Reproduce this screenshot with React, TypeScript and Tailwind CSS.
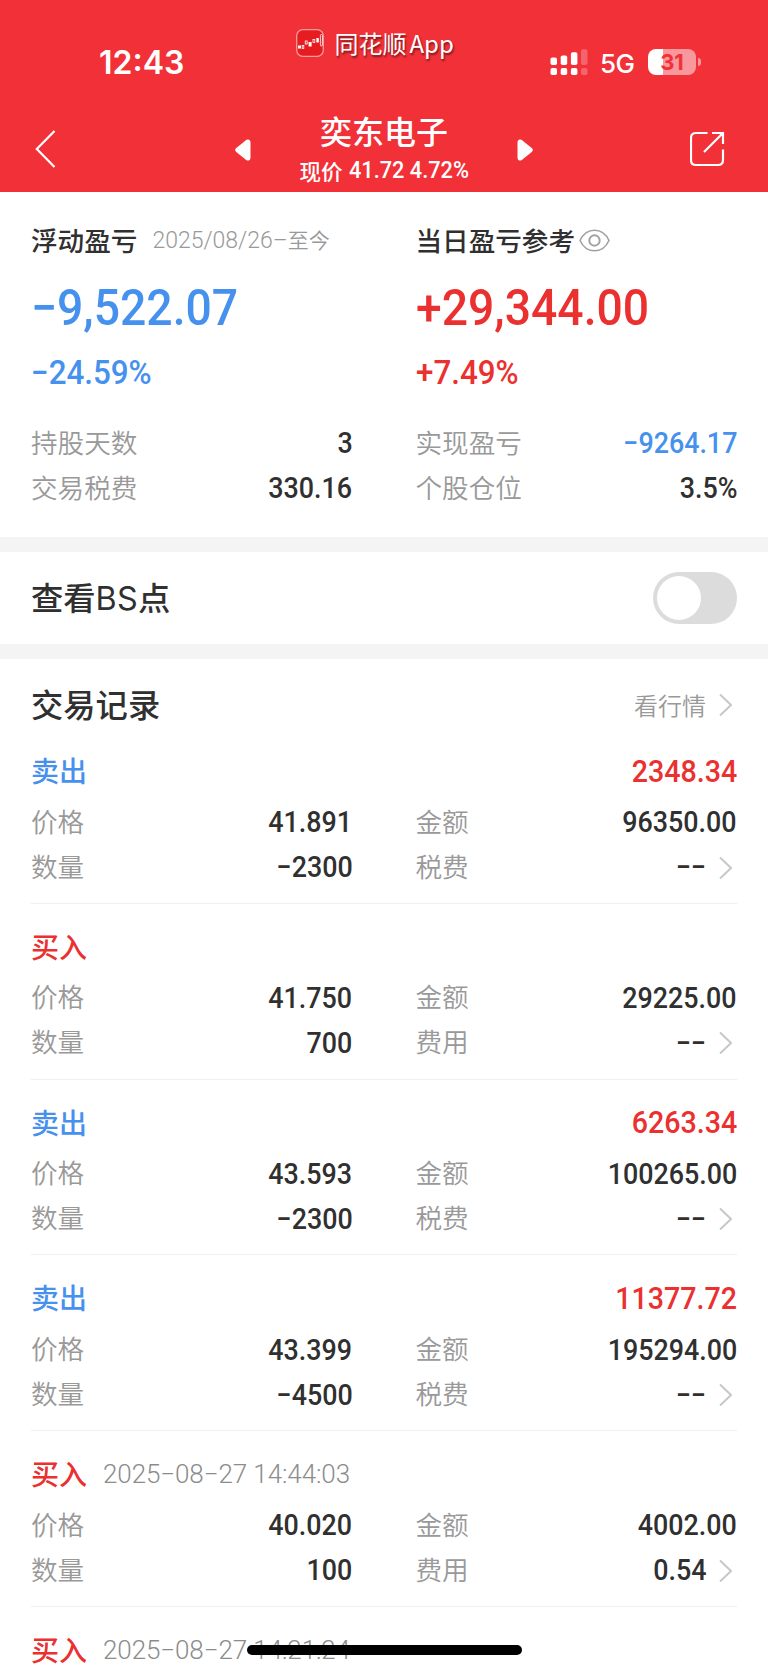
import React from 'react';

type Side = 'buy' | 'sell';

interface TradeRecord {
  side: Side;
  time?: string;
  profit?: string;
  price?: string;
  amount?: string;
  quantity?: string;
  fee?: string;
}

const RECORDS: TradeRecord[] = [
  { side: 'sell', profit: '2348.34', price: '41.891', amount: '96350.00', quantity: '−2300', fee: '−−' },
  { side: 'buy', price: '41.750', amount: '29225.00', quantity: '700', fee: '−−' },
  { side: 'sell', profit: '6263.34', price: '43.593', amount: '100265.00', quantity: '−2300', fee: '−−' },
  { side: 'sell', profit: '11377.72', price: '43.399', amount: '195294.00', quantity: '−4500', fee: '−−' },
  { side: 'buy', time: '2025−08−27 14:44:03', price: '40.020', amount: '4002.00', quantity: '100', fee: '0.54' },
  { side: 'buy', time: '2025−08−27 14:21:24' },
];

/** 右箭头 */
const Chevron = () => (
  <svg className="ml-[13px] mr-[5px] h-6 w-[13px] shrink-0" viewBox="0 0 13 24" fill="none" stroke="#c8c8c8" strokeWidth="2">
    <path d="M1 1.5 12 12 1 22.5" />
  </svg>
);

interface FieldProps {
  label: string;
  value?: string;
  valueClass?: string;
  arrow?: boolean;
}

/** 标签 + 数值 */
const Field: React.FC<FieldProps> = ({ label, value, valueClass = 'text-[#303030]', arrow = false }) => (
  <div className="flex h-[45px] items-center justify-between">
    <span className="-mt-[3px] text-[26.6px] font-[350] text-[#999]">{label}</span>
    <span className="flex items-center">
      <span className={`mt-px origin-right scale-x-[0.91] font-['Roboto',sans-serif] text-[29.5px] font-medium ${valueClass}`}>{value}</span>
      {arrow && <Chevron />}
    </span>
  </div>
);

/** 状态栏 */
const StatusBar = () => (
  <div className="flex h-[94px] items-start text-white">
    <span className="ml-[99px] mt-[46px] w-[197px] font-['Inter',sans-serif] text-[32px] font-semibold leading-[34px]">12:43</span>
    <svg className="mt-[29px] h-7 w-7" viewBox="0 0 28 28" fill="none">
      <rect x="0.7" y="0.7" width="26.6" height="26.6" rx="6" fill="#e51c20" stroke="#f79a9d" strokeWidth="1.3" />
      <g fill="#fff">
        <rect x="2" y="16.5" width="3" height="3" />
        <rect x="12.6" y="13" width="3" height="4.5" />
        <rect x="20.4" y="9" width="2.4" height="4.5" />
      </g>
      <g stroke="#fff" strokeWidth="0.8">
        <rect x="6.2" y="16.5" width="1.6" height="3" />
        <rect x="9.2" y="12" width="2" height="3" />
        <rect x="17" y="10.5" width="1.8" height="3" />
        <rect x="24.4" y="5.5" width="2" height="11.5" rx="1" />
      </g>
    </svg>
    <span className="ml-[10.5px] mt-[26.5px] w-[215.5px] text-[24px] leading-8 [text-shadow:1px_2px_2px_rgba(0,0,0,0.5)]">
      同花顺<span className="ml-[3px]">App</span>
    </span>
    <svg className="mt-[49px] h-[27px] w-[38px]" viewBox="0 0 38 27" fill="#fff">
      <rect x="0.5" y="8.5" width="6.5" height="7.5" rx="1.8" />
      <rect x="0.5" y="19" width="6.5" height="7" rx="1.8" />
      <rect x="10.7" y="6.5" width="6.5" height="9.5" rx="1.8" />
      <rect x="10.7" y="19" width="6.5" height="7" rx="1.8" />
      <rect x="20.9" y="3.3" width="6.5" height="12.7" rx="1.8" />
      <rect x="20.9" y="19" width="6.5" height="7" rx="1.8" />
      <g fillOpacity="0.25">
        <rect x="31" y="0.3" width="6.5" height="15.7" rx="1.8" />
        <rect x="31" y="19" width="6.5" height="7" rx="1.8" />
      </g>
    </svg>
    <span className="ml-[12px] mt-[48.5px] w-[48px] font-['Inter',sans-serif] text-[26px] font-medium leading-[30px] tracking-[-0.5px]">5G</span>
    <div className="mt-[49px] flex items-center gap-[2px]">
      <div className="flex h-[26px] w-12 items-center justify-center rounded-[8px] bg-[linear-gradient(90deg,#fff_31%,#f9989c_31%)] font-['Inter',sans-serif] text-[22px] font-bold leading-none text-[#f23038]">
        31
      </div>
      <div className="h-[8px] w-[2.5px] rounded-r-full bg-[#f9989c]" />
    </div>
  </div>
);

/** 导航栏 */
const NavBar = () => (
  <div className="flex h-[98px] items-start justify-between pl-[35px] pr-[43px] text-white">
    <svg className="mr-[22px] mt-[36px] h-[38px] w-[21px]" viewBox="0 0 21 38" fill="none" stroke="#fff" strokeWidth="2.2">
      <path d="M19.5 1 1.8 19 19.5 37" />
    </svg>
    <div className="flex items-start">
      <svg className="mt-[45px] h-[22px] w-[16px]" viewBox="0 0 16 22" fill="#fff">
        <path d="M1 9.3 11.5 0.8Q15.2-.6 15.5 3v16q-.3 3.6-4 2.2L1 12.7q-1.6-1.7 0-3.4Z" />
      </svg>
      <div className="flex w-[266px] flex-col items-center">
        <h1 className="mt-[14px] text-[32px] font-medium leading-[44px]">奕东电子</h1>
        <p className="ml-[7px] mt-[3px] flex items-center whitespace-pre text-[21.5px] font-medium leading-[30px]">
          现价
          <span className="ml-[6px] mt-px origin-left scale-x-[0.945] font-['Roboto',sans-serif] text-[23px]">41.72 4.72%</span>
        </p>
      </div>
      <svg className="mt-[45px] h-[22px] w-[16px]" viewBox="0 0 16 22" fill="#fff">
        <path d="M15 9.3 4.5 0.8Q.8-.6.5 3v16q.3 3.6 4 2.2L15 12.7q1.6-1.7 0-3.4Z" />
      </svg>
    </div>
    <svg className="mt-[37px] h-[36px] w-[35px]" viewBox="0 0 35 36" fill="none" stroke="#fff" strokeWidth="2.2">
      <path d="M17.5 2H6Q1 2 1 7v22q0 5 5 5h22q5 0 5-5V18.500M22 2H33v11M33 2 14 21" />
    </svg>
  </div>
);

interface SummaryColumnProps {
  title: React.ReactNode;
  total: string;
  percent: string;
  colorClass: string;
  children: React.ReactNode;
}

const SummaryColumn: React.FC<SummaryColumnProps> = ({ title, total, percent, colorClass, children }) => (
  <div>
    <div className="flex h-[46px] items-center">{title}</div>
    <div
      className={`mt-[15px] flex h-[60px] origin-left scale-x-[0.917] items-center font-['Roboto',sans-serif] text-[50.5px] font-medium ${colorClass}`}
    >
      {total}
    </div>
    <div
      className={`mt-[14px] flex h-10 origin-left scale-x-[0.95] items-center font-['Roboto',sans-serif] text-[33px] font-medium ${colorClass}`}
    >
      {percent}
    </div>
    <div className="mt-[29px]">{children}</div>
  </div>
);

/** 盈亏概览 */
const Summary = () => (
  <section className="grid h-[345px] shrink-0 grid-cols-2 gap-x-[63px] px-[31px] pt-[25px]">
    <SummaryColumn
      title={
        <>
          <span className="text-[26.6px] font-medium text-[#303030]">浮动盈亏</span>
          <span className="ml-[15px] whitespace-nowrap font-['Roboto','Noto_Sans_CJK_SC',sans-serif] text-[23px] font-light text-[#999]">
            2025/08/26–<span className="text-[21px] font-[350]">至今</span>
          </span>
        </>
      }
      total="−9,522.07"
      percent="−24.59%"
      colorClass="text-[#4691ee]"
    >
      <Field label="持股天数" value="3" />
      <Field label="交易税费" value="330.16" />
    </SummaryColumn>
    <SummaryColumn
      title={
        <>
          <span className="text-[26.6px] font-medium text-[#303030]">当日盈亏参考</span>
          <svg className="ml-[3.500px] h-[23px] w-[31px]" viewBox="0 0 31 23" fill="none" stroke="#a0a0a0" strokeWidth="1.6">
            <path d="M1 11.5C4 5 9.500 1.200 15.500 1.200S27 5 30 11.500C27 18 21.500 21.800 15.500 21.800S4 18 1 11.500Z" />
            <circle cx="15.500" cy="11.500" r="5.200" strokeWidth="1.900" />
          </svg>
        </>
      }
      total="+29,344.00"
      percent="+7.49%"
      colorClass="text-[#eb3030]"
    >
      <Field label="实现盈亏" value="−9264.17" valueClass="text-[#4691ee]" />
      <Field label="个股仓位" value="3.5%" />
    </SummaryColumn>
  </section>
);

/** 单条交易记录 */
const RecordItem: React.FC<{ record: TradeRecord }> = ({ record }) => {
  const isSell = record.side === 'sell';
  return (
    <li className="h-[175.75px] shrink-0 border-b border-[#f0f0f0] pt-[21px]">
      <div className="flex h-[45px] items-center">
        <span className={`-mt-[3px] text-[28px] font-medium ${isSell ? 'text-[#4691ee]' : 'text-[#eb3030]'}`}>{isSell ? '卖出' : '买入'}</span>
        {record.time && (
          <span className="-mt-px ml-[16px] font-['Roboto',sans-serif] text-[26px] font-light tracking-[-0.1px] text-[#8c8c8c]">{record.time}</span>
        )}
        <span className="ml-auto origin-right scale-x-[0.908] font-['Roboto',sans-serif] text-[31.5px] font-medium text-[#eb3030]">
          {record.profit}
        </span>
      </div>
      {record.price && (
        <div className="mt-[6px] grid grid-cols-2 gap-x-[63px]">
          <Field label="价格" value={record.price} />
          <Field label="金额" value={record.amount} />
          <Field label="数量" value={record.quantity} />
          <Field label={isSell ? '税费' : '费用'} value={record.fee} arrow />
        </div>
      )}
    </li>
  );
};

const App: React.FC = () => (
  <div className="relative flex h-[1670px] w-[768px] flex-col overflow-hidden bg-white font-['Noto_Sans_CJK_SC',sans-serif] leading-none">
    <header className="h-[192px] shrink-0 bg-[#f23038]">
      <StatusBar />
      <NavBar />
    </header>

    <Summary />

    <section className="flex h-[122px] shrink-0 items-center justify-between border-y-[15px] border-[#f4f4f4] px-[31px]">
      <span className="text-[32.3px] font-medium text-[#303030]">
        查看<span className="font-['Inter',sans-serif] font-normal tracking-[0.3px]">BS</span>点
      </span>
      <button type="button" aria-label="查看BS点" className="flex h-[52px] w-[84px] items-center rounded-full bg-[#dcdcdc] p-1">
        <span className="h-11 w-11 rounded-full bg-white" />
      </button>
    </section>

    <section className="px-[31px]">
      <div className="flex h-[69px] items-center justify-between pt-[23px]">
        <h2 className="-mt-[4px] text-[32.3px] font-medium text-[#303030]">交易记录</h2>
        <span className="flex items-center text-[24px] font-[350] text-[#999]">
          看行情
          <Chevron />
        </span>
      </div>
      <ul>
        {RECORDS.map((record, i) => (
          <RecordItem key={i} record={record} />
        ))}
      </ul>
    </section>

    {/* Home 指示条 */}
    <div className="absolute bottom-[15.5px] left-[247px] h-[10px] w-[275px] rounded-full bg-black" />
  </div>
);

export default App;
